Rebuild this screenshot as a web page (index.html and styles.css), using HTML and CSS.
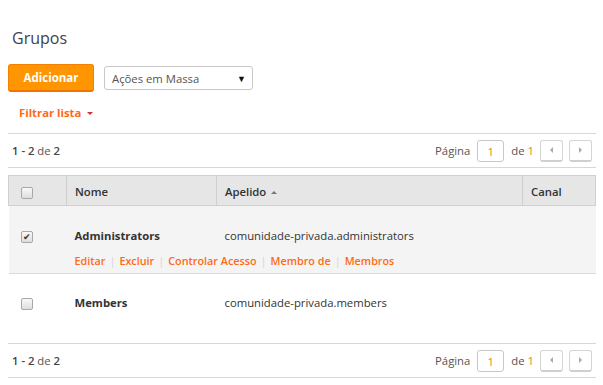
FILE: index.html
```html
<!DOCTYPE html>
<html lang="pt-BR">
<head>
    <meta charset="UTF-8">
    <title>Grupos</title>
    <link rel="stylesheet" href="styles.css">
</head>
<body>
    <div class="page">
        <h2 class="title">Grupos</h2>

        <div class="toolbar">
            <button class="btn-add">Adicionar</button>
            <div class="bulk-select">
                <span>Ações em Massa</span>
                <span class="arrow">&#9660;</span>
            </div>
        </div>

        <div class="filter">Filtrar lista <span class="caret"></span></div>

        <!-- paginação superior -->
        <div class="pager-bar">
            <div class="count"><b>1 - 2</b> de <b>2</b></div>
            <div class="pager">
                <span>Página</span>
                <span class="page-input">1</span>
                <span>de <em>1</em></span>
                <span class="page-btn"><span class="tri-left"></span></span>
                <span class="page-btn"><span class="tri-right"></span></span>
            </div>
        </div>

        <table class="grid">
            <thead>
                <tr>
                    <th class="col-check"><span class="check"></span></th>
                    <th class="col-name">Nome</th>
                    <th class="col-alias">Apelido <span class="sort"></span></th>
                    <th class="col-channel">Canal</th>
                </tr>
            </thead>
            <tbody>
                <tr class="selected first">
                    <td class="col-check"><span class="check checked">&#10004;</span></td>
                    <td class="name">Administrators</td>
                    <td>comunidade-privada.administrators</td>
                    <td></td>
                </tr>
                <tr class="selected actions-row">
                    <td></td>
                    <td colspan="3">
                        <div class="actions">
                            <a>Editar</a><i>|</i><a>Excluir</a><i>|</i><a>Controlar Acesso</a><i>|</i><a>Membro de</a><i>|</i><a>Membros</a>
                        </div>
                    </td>
                </tr>
                <tr class="plain">
                    <td class="col-check"><span class="check"></span></td>
                    <td class="name">Members</td>
                    <td>comunidade-privada.members</td>
                    <td></td>
                </tr>
            </tbody>
        </table>

        <!-- paginação inferior -->
        <div class="pager-bar bottom">
            <div class="count"><b>1 - 2</b> de <b>2</b></div>
            <div class="pager">
                <span>Página</span>
                <span class="page-input">1</span>
                <span>de <em>1</em></span>
                <span class="page-btn"><span class="tri-left"></span></span>
                <span class="page-btn"><span class="tri-right"></span></span>
            </div>
        </div>
    </div>
</body>
</html>
```

FILE: styles.css
```css
body {
    margin: 0;
    font-family: "Open Sans", Arial, sans-serif;
    font-size: 11.3px;
    color: #333;
    background-color: white;
}

.page {
    width: 588px;
    margin: 0 8px;
}

.title {
    margin: 0;
    padding: 26px 0 0 4px;
    font-size: 16px;
    font-weight: normal;
    line-height: 24px;
    color: #3c4150;
}

.toolbar {
    display: flex;
    align-items: center;
    gap: 10px;
    margin-top: 14px;
}

.btn-add {
    width: 86px;
    height: 28px;
    padding: 0;
    background-color: #ff9500;
    border: 1px solid #f57f00;
    border-bottom: 2px solid #f07300;
    border-radius: 3px;
    color: white;
    font-family: inherit;
    font-size: 11.5px;
    font-weight: bold;
}

.bulk-select {
    width: 149px;
    height: 24px;
    box-sizing: border-box;
    display: flex;
    align-items: center;
    justify-content: space-between;
    padding: 0 6px 0 7px;
    border: 1px solid #c8c8c8;
    border-radius: 3px;
    color: #555;
}

.bulk-select .arrow {
    font-size: 9px;
    color: #111;
}

.filter {
    margin: 12px 0 0 11px;
    height: 18px;
    line-height: 18px;
    color: #ff6a13;
    font-weight: bold;
}

.caret {
    display: inline-block;
    width: 0;
    height: 0;
    margin-left: 3px;
    vertical-align: middle;
    border-left: 3px solid transparent;
    border-right: 3px solid transparent;
    border-top: 3px solid #d0312d;
}

.pager-bar {
    display: flex;
    align-items: center;
    justify-content: space-between;
    height: 33px;
    margin-top: 11px;
    padding: 0 4px;
    border-top: 1px solid #d8d8d8;
    border-bottom: 1px solid #d8d8d8;
}

.pager-bar.bottom {
    margin-top: 12px;
}

.count {
    color: #555;
}

.count b {
    font-weight: 600;
    color: #444;
}

.pager {
    display: flex;
    align-items: center;
    gap: 6px;
    color: #555;
}

.pager em {
    font-style: normal;
    color: #d98a1a;
}

.page-input {
    width: 27px;
    height: 22px;
    box-sizing: border-box;
    margin: 0 1px;
    border: 1px solid #c8c8c8;
    border-radius: 3px;
    text-align: center;
    line-height: 21px;
    color: #d98a1a;
}

.page-btn {
    width: 23px;
    height: 22px;
    box-sizing: border-box;
    display: flex;
    align-items: center;
    justify-content: center;
    border: 1px solid #d5d5d5;
    border-bottom: 2px solid #cfcfcf;
    border-radius: 3px;
    background-color: white;
}

.tri-left,
.tri-right {
    width: 0;
    height: 0;
    border-top: 3px solid transparent;
    border-bottom: 3px solid transparent;
}

.tri-left {
    border-right: 3px solid #aaa;
}

.tri-right {
    border-left: 3px solid #aaa;
}

.grid {
    width: 588px;
    margin-top: 7px;
    border-collapse: collapse;
    table-layout: fixed;
}

.grid th,
.grid td {
    box-sizing: border-box;
}

.grid th {
    height: 30px;
    padding: 2px 8px 0;
    background-color: #e6e6e6;
    border: 1px solid #cfcfcf;
    text-align: left;
    font-weight: 600;
    color: #333;
    vertical-align: middle;
}

.grid .col-check {
    width: 58px;
    padding-left: 12px;
}

.grid th.col-name {
    width: 150px;
}

.grid th.col-alias {
    width: 306px;
}

.sort {
    display: inline-block;
    width: 0;
    height: 0;
    margin-left: 2px;
    vertical-align: middle;
    border-left: 3px solid transparent;
    border-right: 3px solid transparent;
    border-bottom: 3px solid #777;
}

.grid td {
    padding: 0 8px;
    line-height: 18px;
    color: #333;
}

.grid tr.selected td {
    background-color: #f4f4f4;
}

.grid tr.first td {
    padding-top: 21px;
    padding-bottom: 3px;
}

.grid tr.actions-row td {
    padding-top: 4px;
    padding-bottom: 3px;
    border-bottom: 1px solid #dcdcdc;
}

.grid tr.plain td {
    padding-top: 20px;
    padding-bottom: 19px;
}

.grid td.name {
    font-weight: bold;
}

.check {
    display: inline-block;
    width: 12px;
    height: 12px;
    box-sizing: border-box;
    border: 1px solid #a8a8a8;
    border-radius: 2px;
    background: linear-gradient(#f8f8f8, #dedede);
    vertical-align: middle;
    font-size: 9px;
    line-height: 10px;
    text-align: center;
    color: #333;
}

.actions {
    display: flex;
    gap: 4px;
    color: #ff6a13;
    font-size: 10.8px;
    font-weight: 600;
}

.actions i {
    font-style: normal;
    font-weight: normal;
    color: #d4d4d4;
}
```
